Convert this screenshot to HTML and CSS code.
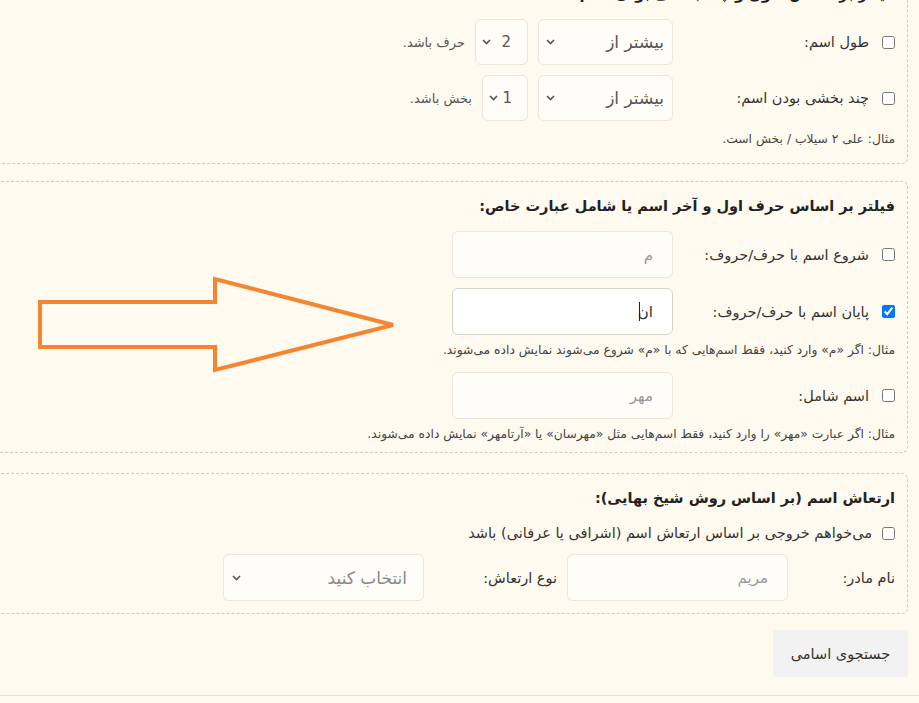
FILE: index.html
```html
<!DOCTYPE html>
<html lang="fa" dir="rtl">
<head>
  <meta charset="UTF-8">
  <meta name="viewport" content="width=device-width, initial-scale=1.0">
  <title>جستجوی اسامی</title>
  <link rel="stylesheet" href="styles.css">
</head>
<body>
  <div class="page">
    <div class="box box-first">
      <h3 class="box-title">فیلتر بر اساس طول و چند بخشی بودن اسم:</h3>
      <div class="row">
        <label class="check"><input type="checkbox"><span>طول اسم:</span></label>
        <select class="pick pick-wide"><option>بیشتر از</option><option>کمتر از</option><option>برابر</option></select>
        <select class="pick pick-num pick-num2"><option>2</option><option>3</option><option>4</option></select>
        <span class="suffix">حرف باشد.</span>
      </div>
      <div class="row">
        <label class="check"><input type="checkbox"><span>چند بخشی بودن اسم:</span></label>
        <select class="pick pick-wide"><option>بیشتر از</option><option>کمتر از</option><option>برابر</option></select>
        <select class="pick pick-num"><option>1</option><option>2</option><option>3</option></select>
        <span class="suffix">بخش باشد.</span>
      </div>
      <p class="hint">مثال: علی ۲ سیلاب / بخش است.</p>
    </div>

    <div class="box">
      <h3 class="box-title">فیلتر بر اساس حرف اول و آخر اسم یا شامل عبارت خاص:</h3>
      <div class="row">
        <label class="check"><input type="checkbox"><span>شروع اسم با حرف/حروف:</span></label>
        <input class="text" type="text" placeholder="م">
      </div>
      <div class="row">
        <label class="check"><input type="checkbox" checked><span>پایان اسم با حرف/حروف:</span></label>
        <div class="text-wrap">
          <input class="text text-active" type="text" value="ان">
          <span class="caret"></span>
        </div>
      </div>
      <p class="hint">مثال: اگر «م» وارد کنید، فقط اسم‌هایی که با «م» شروع می‌شوند نمایش داده می‌شوند.</p>
      <div class="row">
        <label class="check"><input type="checkbox"><span>اسم شامل:</span></label>
        <input class="text" type="text" placeholder="مهر">
      </div>
      <p class="hint">مثال: اگر عبارت «مهر» را وارد کنید، فقط اسم‌هایی مثل «مهرسان» یا «آرتامهر» نمایش داده می‌شوند.</p>
    </div>

    <div class="box box-last">
      <h3 class="box-title">ارتعاش اسم (بر اساس روش شیخ بهایی):</h3>
      <label class="check check-line"><input type="checkbox"><span>می‌خواهم خروجی بر اساس ارتعاش اسم (اشرافی یا عرفانی) باشد</span></label>
      <div class="row">
        <span class="plain plain-mother">نام مادر:</span>
        <input class="text" type="text" placeholder="مریم">
        <span class="plain plain-type">نوع ارتعاش:</span>
        <select class="pick pick-type">
          <option>انتخاب کنید</option>
          <option>اشرافی</option>
          <option>عرفانی</option>
        </select>
      </div>
    </div>

    <button class="search" type="button">جستجوی اسامی</button>
  </div>

  <div class="results"></div>

  <!-- فلش راهنما روی فرم -->
  <svg class="pointer" width="919" height="703" viewBox="0 0 919 703">
    <polygon points="40,302 215,302 215,279 393,325 215,370 215,347 40,347" fill="none" stroke="#f5862f" stroke-width="4" stroke-linejoin="miter"/>
  </svg>
</body>
</html>
```

FILE: styles.css
```css
body {
  margin: 0;
  background-color: #fffaef;
  font-family: "DejaVu Sans", sans-serif;
  font-size: 14.5px;
  color: #333;
  overflow: hidden;
  height: 703px;
  position: relative;
}

.page {
  margin: -31px 11px 0 -30px;
}

.box {
  border: 1px dashed #cfcbc2;
  border-radius: 6px;
  padding: 12px 12px 10px 12px;
  margin-bottom: 20px;
}

.box-first {
  margin-bottom: 17px;
  padding-bottom: 16px;
}

.box-first .hint {
  margin-top: 0;
}

.box-last {
  margin-bottom: 16px;
  padding-bottom: 12px;
}

.box-title {
  margin: 0 0 13px 0;
  font-size: 14.5px;
  line-height: 24px;
  font-weight: bold;
  color: #222;
}

.row {
  display: flex;
  align-items: center;
  gap: 10px;
  margin-bottom: 10px;
}

.row:last-child {
  margin-bottom: 0;
}

.check {
  display: flex;
  align-items: center;
  flex-shrink: 0;
  gap: 13px;
  width: 210px;
  margin-left: 2px;
  color: #333;
}

.check input {
  margin: 0;
  width: 13px;
  height: 13px;
  flex-shrink: 0;
}

.check-line {
  width: auto;
  gap: 10px;
  line-height: 20px;
  margin: 0 0 11px 0;
}

.pick {
  appearance: none;
  -webkit-appearance: none;
  height: 46px;
  border: 1px solid #ece7dd;
  border-radius: 6px;
  background-color: #fffdf8;
  background-image: url("data:image/svg+xml,%3Csvg xmlns='http://www.w3.org/2000/svg' width='9' height='6' viewBox='0 0 9 6'%3E%3Cpath d='M1 1l3.5 3.5L8 1' fill='none' stroke='%23555' stroke-width='1.6'/%3E%3C/svg%3E");
  background-repeat: no-repeat;
  background-position: left 7px center;
  color: #555;
  font-family: inherit;
  font-size: 17px;
  padding: 0 8px 0 20px;
  direction: rtl;
}

.pick-wide {
  width: 135px;
}

.pick-num {
  width: 46px;
  font-size: 15px;
  padding: 0 15px 0 14px;
  background-position: left 6px center;
}

.pick-num2 {
  width: 53px;
  padding-right: 16px;
}

.suffix {
  color: #555;
  font-size: 13px;
}

.text-wrap {
  position: relative;
}

.text {
  width: 221px;
  height: 47px;
  box-sizing: border-box;
  border: 1px solid #ece7dd;
  border-radius: 6px;
  background-color: #fffdf8;
  padding: 0 19px;
  font-family: inherit;
  font-size: 15px;
  color: #333;
  direction: rtl;
}

.text::placeholder {
  color: #999;
}

.text-active {
  background-color: #fff;
  border-color: #d8d3cb;
}

.caret {
  position: absolute;
  top: 14px;
  right: 33px;
  width: 1px;
  height: 19px;
  background-color: #222;
}

.hint {
  margin: -3px 0 14px 0;
  font-size: 12.3px;
  line-height: 16px;
  color: #444;
}

.hint:last-child {
  margin-bottom: 0;
}

.plain {
  flex-shrink: 0;
  text-align: right;
  color: #333;
}

.plain-mother {
  width: 95px;
  margin-left: 2px;
}

.plain-type {
  width: 123px;
}

.pick-type {
  width: 201px;
  height: 47px;
  padding: 0 16px 0 24px;
  font-size: 17px;
  color: #888;
  background-position: left 8px center;
}

.search {
  display: block;
  width: 135px;
  height: 47px;
  margin: 0 0 0 auto;
  border: none;
  border-radius: 2px;
  background-color: #f2f2f2;
  font-family: inherit;
  font-size: 14.5px;
  color: #333;
}

.results {
  margin-top: 18px;
  border-top: 1px solid #e4e0d8;
}

.pointer {
  position: absolute;
  top: 0;
  left: 0;
  pointer-events: none;
}
```
